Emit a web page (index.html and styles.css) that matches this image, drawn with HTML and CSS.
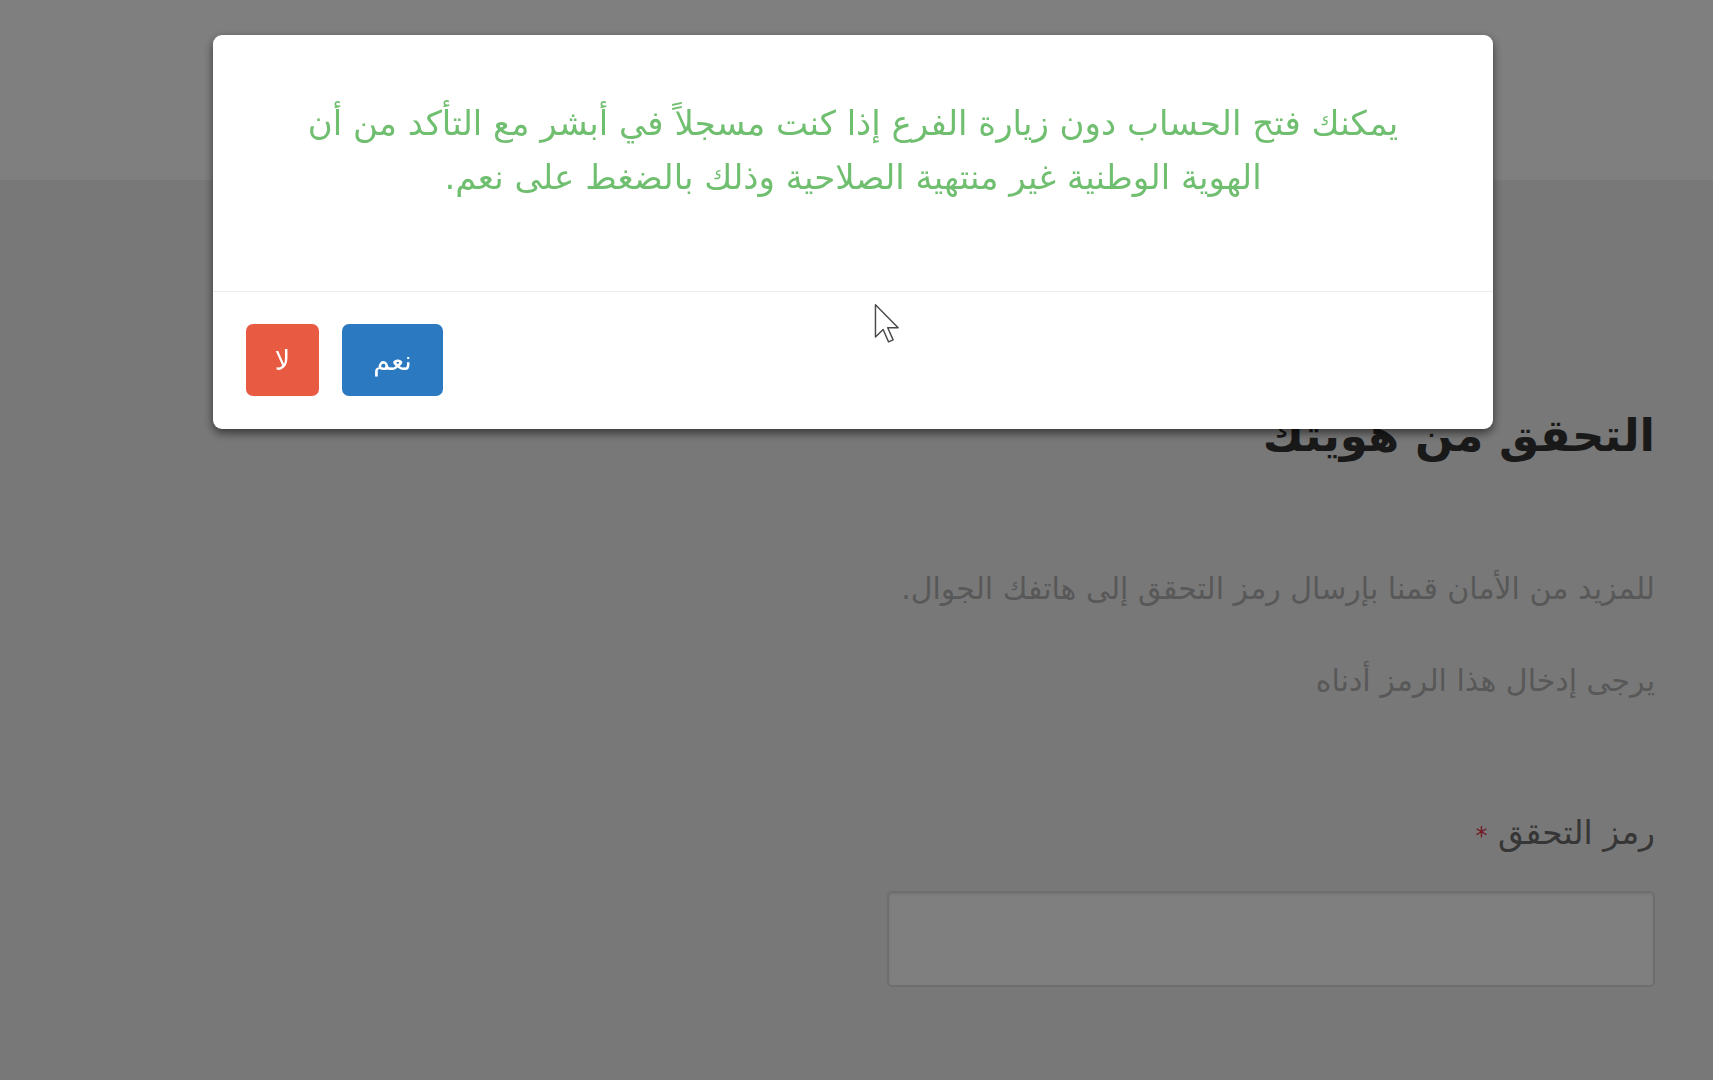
FILE: index.html
```html
<!DOCTYPE html>
<html lang="ar" dir="rtl">
  <head>
    <meta charset="utf-8">
    <title>التحقق من هويتك</title>
    <link rel="stylesheet" href="styles.css">
  </head>
  <body>
    <header class="top"></header>

    <main class="page">
      <section class="form-col">
        <h1 class="title">التحقق من هويتك</h1>
        <p class="note">للمزيد من الأمان قمنا بإرسال رمز التحقق إلى هاتفك الجوال.</p>
        <p class="note">يرجى إدخال هذا الرمز أدناه</p>
        <label class="field-label" for="otp">رمز التحقق <span class="req">*</span></label>
        <input id="otp" class="field" type="text">
      </section>
      <section class="side-col"></section>
    </main>

    <div class="overlay">
      <div class="dialog">
        <div class="dialog-body">
          <p class="dialog-msg">يمكنك فتح الحساب دون زيارة الفرع إذا كنت مسجلاً في أبشر مع التأكد من أن الهوية الوطنية غير منتهية الصلاحية وذلك بالضغط على نعم.</p>
        </div>
        <div class="dialog-foot">
          <button class="btn btn-yes">نعم</button>
          <button class="btn btn-no">لا</button>
        </div>
      </div>
    </div>

    <svg class="pointer" width="26" height="41" viewBox="0 0 12.5 19.5">
      <path d="M0.7 0.7 L0.7 16.2 L4.4 12.6 L7 18.6 L9.2 17.6 L6.6 11.8 L11.6 11.8 Z" fill="#fff" stroke="#4a4a4a" stroke-width="0.7" stroke-linejoin="round"/>
    </svg>
  </body>
</html>
```

FILE: styles.css
```css
body {
  margin: 0;
  background-color: #f0f0f0;
  font-family: "DejaVu Sans", sans-serif;
  color: #333;
}
.top {
  height: 180px;
  background-color: #fff;
}
.page {
  display: grid;
  grid-template-columns: 1fr 1fr;
  column-gap: 60px;
  padding: 0 58px;
}
.form-col {
  display: flex;
  flex-direction: column;
  align-items: stretch;
  padding-top: 228px;
}
.title {
  margin: 0 0 105px;
  font-size: 45px;
  line-height: 56px;
  font-weight: bold;
  color: #333;
}
.note {
  margin: 0 0 52px;
  font-size: 30px;
  line-height: 40px;
  color: #b0b0b0;
}
.field-label {
  margin-top: 58px;
  font-size: 33px;
  line-height: 44px;
  color: #6c6c6c;
}
.req {
  color: #e8334f;
  font-size: 24px;
}
.field {
  margin-top: 33px;
  height: 96px;
  box-sizing: border-box;
  border: 2px solid #dcdcdc;
  border-radius: 5px;
  background-color: #fff;
  box-shadow: inset 0 2px 3px rgba(0, 0, 0, 0.08);
}

/* modal */
.overlay {
  position: fixed;
  inset: 0;
  background-color: rgba(0, 0, 0, 0.5);
  display: flex;
  justify-content: center;
  align-items: flex-start;
  padding-right: 7px;
}
.dialog {
  margin-top: 35px;
  width: 1280px;
  background-color: #fff;
  border-radius: 9px;
  box-shadow: 0 4px 10px rgba(0, 0, 0, 0.55);
}
.dialog-body {
  height: 257px;
  box-sizing: border-box;
  padding: 61px 90px 0;
  border-bottom: 1px solid #ececec;
}
.dialog-msg {
  margin: 0;
  text-align: center;
  font-size: 34px;
  line-height: 54px;
  color: #70bf70;
}
.dialog-foot {
  display: flex;
  justify-content: flex-end;
  gap: 23px;
  padding: 32px 33px 33px;
}
.btn {
  height: 72px;
  padding: 0 24px;
  border: none;
  border-radius: 7px;
  font-family: "DejaVu Sans", sans-serif;
  font-size: 27px;
  color: #fff;
}
.btn-yes {
  min-width: 101px;
  background-color: #2a79c1;
}
.btn-no {
  min-width: 73px;
  background-color: #e85a42;
}
.pointer {
  position: absolute;
  left: 874px;
  top: 303px;
}
```
